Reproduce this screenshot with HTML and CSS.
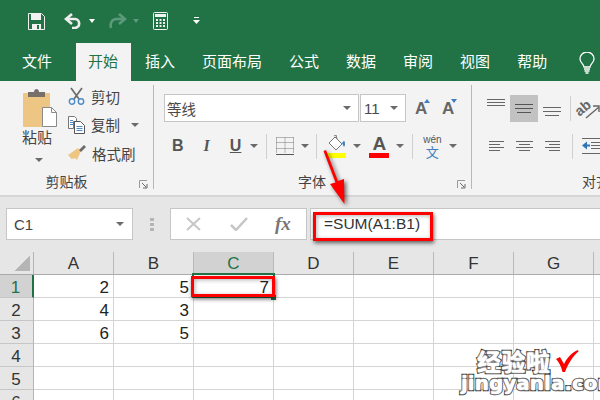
FILE: index.html
```html
<!DOCTYPE html>
<html lang="zh-CN">
  <head>
    <meta charset="UTF-8">
    <title>Excel</title>
    <link rel="stylesheet" href="styles.css">
  </head>
  <body>
    <div class="page">
      <!-- Quick access -->
      <div class="titlebar">
        <svg class="qa qa-save" width="17" height="17" viewBox="0 0 17 17"><path d="M.5.5h13l3 3v13H.5z" fill="none" stroke="#f2f2f2"/><path d="M3 1h10v6H3zM4 11h9v5H4z" fill="#f2f2f2"/><path d="M9 12h2v4H9z" fill="#217346"/></svg>
        <svg class="qa qa-undo" width="19" height="16" viewBox="0 0 19 16"><path d="M8 1L2 6l6 5" fill="none" stroke="#eee" stroke-width="2.6"/><path d="M3 6h8c5 0 6 8 0 9H8" fill="none" stroke="#eee" stroke-width="2.6"/></svg>
        <span class="caret caret-white qa-c1"></span>
        <svg class="qa qa-redo" width="19" height="16" viewBox="0 0 19 16"><path d="M11 1l6 5-6 5" fill="none" stroke="#5c9a7c" stroke-width="2.6"/><path d="M16 6H9c-6 0-7 5-6 9" fill="none" stroke="#5c9a7c" stroke-width="2.6"/></svg>
        <span class="caret caret-dim qa-c2"></span>
        <svg class="qa qa-calc" width="15" height="18" viewBox="0 0 15 18"><rect x=".5" y=".5" width="14" height="17" rx="1" fill="none" stroke="#f2f2f2"/><path d="M2 2h11v3H2zM3 7h2v2H3zM6.500 7h2v2h-2zM10 7h2v2h-2zM3 10h2v2H3zM6.500 10h2v2h-2zM10 10h2v2h-2zM3 13h2v2H3zM6.500 13h2v2h-2zM10 13h2v2h-2z" fill="#f2f2f2"/></svg>
        <svg class="qa qa-more" width="7" height="8" viewBox="0 0 7 8"><path d="M1 .5h5" stroke="#fff"/><path d="M0 3h7L3.500 7z" fill="#fff"/></svg>
      </div>

      <!-- Tabs -->
      <div class="tabs">
        <div class="tab tab-file">文件</div>
        <div class="tab active">开始</div>
        <div class="tab">插入</div>
        <div class="tab">页面布局</div>
        <div class="tab">公式</div>
        <div class="tab">数据</div>
        <div class="tab">审阅</div>
        <div class="tab">视图</div>
        <div class="tab">帮助</div>
        <svg class="bulb" width="16" height="22" viewBox="0 0 16 22"><path d="M5 15c0-3-4-4-4-8a7 7 0 0 1 14 0c0 4-4 5-4 8z" fill="none" stroke="#fff" stroke-width="1.300"/><path d="M5 17h6M5.500 19h5M6.500 21h3" stroke="#fff" stroke-width="1.300"/></svg>
      </div>

      <!-- Ribbon -->
      <div class="ribbon">
        <div class="group group-clip">
          <div class="group-body clip-body">
            <div class="paste">
              <svg width="35" height="39" viewBox="0 0 35 39"><rect x="0" y="4" width="27" height="34" rx="1" fill="#eec684"/><path d="M5 3h6c0-4 5-4 5 0h6v5H5z" fill="#77706a"/><path d="M19.500 18.500h9l5 5v14h-14z" fill="#fff" stroke="#8a8a8a"/><path d="M28.500 18.500v5h5" fill="none" stroke="#8a8a8a"/></svg>
              <span class="paste-label">粘贴</span>
              <span class="caret paste-caret"></span>
            </div>
            <div class="clip-list">
              <div class="clip-row">
                <svg width="17" height="18" viewBox="0 0 17 18"><path d="M3 1l8 11M14 1L6 12" stroke="#6b6b6b" stroke-width="1.700"/><circle cx="4" cy="14.500" r="2.700" fill="none" stroke="#4f8ac6" stroke-width="1.400"/><circle cx="13" cy="14.500" r="2.700" fill="none" stroke="#4f8ac6" stroke-width="1.400"/></svg>
                <span>剪切</span>
              </div>
              <div class="clip-row">
                <svg width="17" height="18" viewBox="0 0 17 18"><path d="M.5.500h6l2 2v3H5.500v7h-5z" fill="#fff" stroke="#777"/><path d="M6.500 5.500h6l4 4v8h-10z" fill="#fff" stroke="#555"/><path d="M8.500 10.500h6M8.500 12.500h6M8.500 14.500h6M2 4.500h3M2 6.500h3M2 8.500h3" stroke="#4f8ac6"/></svg>
                <span>复制</span>
                <span class="caret copy-caret"></span>
              </div>
              <div class="clip-row">
                <svg width="18" height="16" viewBox="0 0 18 16"><path d="M10 3l3 3-4 9-2-2-1 1-1-1-1 1.500L0 10z" fill="#eec684"/><path d="M11 5l5-5 2 2-5 5z" fill="#6b6b6b"/></svg>
                <span>格式刷</span>
              </div>
            </div>
          </div>
          <div class="group-label">剪贴板</div>
          <svg class="launcher" width="9" height="9" viewBox="0 0 9 9"><path d="M.5 8V.5H8" fill="none" stroke="#999"/><path d="M3 3l4 4M8 4v4H4" fill="none" stroke="#666"/></svg>
        </div>

        <div class="group group-font">
          <div class="group-body">
            <div class="font-row">
              <div class="combo combo-name">等线<span class="caret"></span></div>
              <div class="combo combo-size">11<span class="caret"></span></div>
              <div class="grow">
                <span class="grow-a">A</span>
                <svg width="6" height="4" viewBox="0 0 6 4"><path d="M0 4h6L3 0z" fill="#3f7fbf"/></svg>
              </div>
              <div class="grow grow-down">
                <span class="grow-a">A</span>
                <svg width="6" height="4" viewBox="0 0 6 4"><path d="M0 0h6L3 4z" fill="#3f7fbf"/></svg>
              </div>
            </div>
            <div class="format-row">
              <span class="fmt fmt-b">B</span>
              <span class="fmt fmt-i">I</span>
              <span class="fmt fmt-u">U</span>
              <span class="caret fmt-c-u"></span>
              <span class="sep sep-1"></span>
              <svg class="ico-border" width="18" height="18" viewBox="0 0 18 18"><path d="M.5.500h17M.5 5.500h17M.5 11.500h17M.5.500v15M9 .5v15M17.500.5v15" fill="none" stroke="#777" stroke-dasharray="1 1"/><path d="M0 17.500h18" stroke="#555"/></svg>
              <span class="caret fmt-c-b"></span>
              <span class="sep sep-2"></span>
              <svg class="ico-fill" width="21" height="23" viewBox="0 0 21 23"><path d="M9 2l7 7-6 6-7-7z" fill="#fff" stroke="#777"/><path d="M8 1l2-1 1 4" fill="none" stroke="#777"/><path d="M16 8c2-3 3-3 3 2l-1 2z" fill="#3f7fbf"/><path d="M0 18h20v5H0z" fill="#ff0"/></svg>
              <span class="caret fmt-c-f"></span>
              <div class="ico-color">
                <span>A</span>
                <i></i>
              </div>
              <span class="caret fmt-c-a"></span>
              <span class="sep sep-3"></span>
              <div class="ico-wen">
                <span class="wen-top">wén</span>
                <span class="wen-bot">文</span>
              </div>
              <span class="caret fmt-c-w"></span>
            </div>
          </div>
          <div class="group-label">字体</div>
          <svg class="launcher" width="9" height="9" viewBox="0 0 9 9"><path d="M.5 8V.5H8" fill="none" stroke="#999"/><path d="M3 3l4 4M8 4v4H4" fill="none" stroke="#666"/></svg>
        </div>

        <div class="group group-align">
          <div class="group-body">
            <div class="align-row">
              <svg class="al al-top" width="18" height="8" viewBox="0 0 18 8"><path d="M0 .5h18M0 3.500h18M0 6.500h18" stroke="#666"/></svg>
              <div class="al-mid"><svg width="18" height="10" viewBox="0 0 18 10"><path d="M0 .5h18M0 4.500h18M2 8.500h14" stroke="#555"/></svg></div>
              <svg class="al al-bot" width="18" height="10" viewBox="0 0 18 10"><path d="M0 .5h18M0 4.500h18M2 8.500h14" stroke="#666"/></svg>
              <span class="sep sep-4"></span>
              <svg class="al-ab" width="26" height="22" viewBox="0 0 26 22"><text x="1" y="15" transform="rotate(-40 8 12)" class="ab-text">ab</text><path d="M11 20L24 9M18 8h6v6" fill="none" stroke="#666" stroke-width="1.400"/></svg>
            </div>
            <div class="align-row align-row-2">
              <svg width="15" height="11" viewBox="0 0 15 11"><path d="M0 .5h15M0 3.500h11M0 6.500h15M0 9.500h11" stroke="#666"/></svg>
              <svg width="17" height="11" viewBox="0 0 17 11"><path d="M0 .5h17M3 3.500h11M0 6.500h17M3 9.500h11" stroke="#666"/></svg>
              <svg width="15" height="11" viewBox="0 0 15 11"><path d="M0 .5h15M4 3.500h11M0 6.500h15M4 9.500h11" stroke="#666"/></svg>
              <span class="sep sep-5"></span>
              <svg class="al-indent" width="20" height="16" viewBox="0 0 20 16"><path d="M0 .5h20M9 4.500h11M9 7.500h11M9 10.500h11M0 15.500h20" stroke="#666"/><path d="M0 7.500l5-4v3h3v2H5v3z" fill="#2f75b5"/></svg>
            </div>
          </div>
          <div class="group-label align-label">对齐</div>
        </div>
      </div>

      <!-- Formula bar -->
      <div class="formula">
        <div class="namebox">C1<span class="caret"></span></div>
        <div class="grip"><i></i><i></i><i></i></div>
        <div class="fx-box">
          <svg width="15" height="14" viewBox="0 0 15 14"><path d="M1 1l13 12M14 1L1 13" stroke="#c6c6c6" stroke-width="2"/></svg>
          <svg class="fx-check" width="18" height="14" viewBox="0 0 18 14"><path d="M1 8l5 5L17 1" fill="none" stroke="#c6c6c6" stroke-width="2.500"/></svg>
          <span class="fx">fx</span>
        </div>
        <div class="formula-text">=SUM(A1:B1)</div>
      </div>

      <!-- Sheet -->
      <div class="sheet">
        <div class="corner"></div>
        <div class="col">A</div><div class="col">B</div><div class="col col-on">C</div><div class="col">D</div><div class="col">E</div><div class="col">F</div><div class="col">G</div><div class="col"></div>

        <div class="row row-on">1</div><div class="cell">2</div><div class="cell">5</div><div class="cell">7</div><div class="cell"></div><div class="cell"></div><div class="cell"></div><div class="cell"></div><div class="cell"></div>
        <div class="row">2</div><div class="cell">4</div><div class="cell">3</div><div class="cell"></div><div class="cell"></div><div class="cell"></div><div class="cell"></div><div class="cell"></div><div class="cell"></div>
        <div class="row">3</div><div class="cell">6</div><div class="cell">5</div><div class="cell"></div><div class="cell"></div><div class="cell"></div><div class="cell"></div><div class="cell"></div><div class="cell"></div>
        <div class="row">4</div><div class="cell"></div><div class="cell"></div><div class="cell"></div><div class="cell"></div><div class="cell"></div><div class="cell"></div><div class="cell"></div><div class="cell"></div>
        <div class="row">5</div><div class="cell"></div><div class="cell"></div><div class="cell"></div><div class="cell"></div><div class="cell"></div><div class="cell"></div><div class="cell"></div><div class="cell"></div>
        <div class="row">6</div><div class="cell"></div><div class="cell"></div><div class="cell"></div><div class="cell"></div><div class="cell"></div><div class="cell"></div><div class="cell"></div><div class="cell"></div>
      </div>

      <!-- Annotations on top of the shot -->
      <div class="selection"></div>
      <div class="handle"></div>
      <div class="mark mark-formula"></div>
      <div class="mark mark-cell"></div>
      <svg class="arrow" width="40" height="70" viewBox="0 0 40 70"><path d="M3.500 1L6 0l12 31 6-2 .5 25L10 34l5.500-1.500z" fill="#f00"/></svg>
      <div class="wm wm-cn">经验啦</div>
      <div class="wm wm-en">jingyanla.com</div>
      <svg class="wm-check" width="24" height="24" viewBox="0 0 24 24"><path d="M1 10l4-2 4 7C12 9 17 3 23 1l.5 1.500C18 7 13 15 10 23H7.500C6 17 4 13 1 10z" fill="#f00"/></svg>
    </div>
  </body>
</html>
```

FILE: styles.css
```css
/* Reset */
* {
  margin: 0;
  padding: 0;
  box-sizing: border-box;
}

body {
  font-family: 'Noto Sans CJK SC', 'Liberation Sans', sans-serif;
  background-color: #fff;
}

.page {
  position: relative;
  width: 600px;
  height: 400px;
  overflow: hidden;
}

svg {
  display: block;
  flex: none;
}

.caret {
  display: block;
  flex: none;
  width: 0;
  height: 0;
  border-left: 4px solid transparent;
  border-right: 4px solid transparent;
  border-top: 4px solid #6a6a6a;
}

.caret-white {
  border-left-width: 3.500px;
  border-right-width: 3.500px;
  border-top-color: #fff;
}

.caret-dim {
  border-left-width: 3.500px;
  border-right-width: 3.500px;
  border-top-color: #5c9a7c;
}

/* Title bar */
.titlebar {
  display: flex;
  align-items: center;
  height: 43px;
  padding: 0 0 1px 28px;
  background-color: #217346;
}

.qa-undo { margin-left: 19px; }
.qa-c1 { margin-left: 6px; }
.qa-redo { margin-left: 13px; }
.qa-c2 { margin-left: 6px; }
.qa-calc { margin-left: 14px; }
.qa-more { margin-left: 25px; }

/* Tabs */
.tabs {
  display: flex;
  gap: 2px;
  height: 38px;
  padding-left: 9.500px;
  background-color: #217346;
}

.tab {
  padding: 0 12.500px;
  color: #fff;
  font-size: 15px;
  line-height: 35px;
}

.tab-file { margin-right: 9px; }

.tab.active {
  background-color: #f3f3f3;
  color: #217346;
}

.bulb {
  margin: 9px 0 0 17px;
}

/* Ribbon */
.ribbon {
  display: flex;
  height: 116px;
  padding: 4px 0 6px;
  background-color: #f3f3f3;
  border-bottom: 2px solid #d6d6d6;
}

.group {
  position: relative;
  display: flex;
  flex-direction: column;
  flex: none;
  border-right: 1px solid #b8b8b8;
  color: #444;
}

.group-body {
  height: 90px;
}

.group-label {
  font-size: 14px;
  line-height: 16px;
  text-align: center;
  color: #444;
}

.launcher {
  position: absolute;
  right: 5px;
  bottom: 0;
}

.group-clip { width: 154px; }
.group-font { width: 318px; }
.group-align { border-right: none; flex: 1; }

.group-clip .group-label { padding-right: 20px; }
.group-font .group-label { padding-right: 1px; }

.clip-body {
  display: flex;
}

.paste {
  display: flex;
  flex-direction: column;
  align-items: flex-start;
  width: 68px;
  padding: 4px 0 0 23px;
  font-size: 15px;
}

.paste-label {
  margin: -2px 0 0 -1px;
  line-height: 22px;
}

.paste-caret {
  margin: 10px 0 0 12px;
}

.clip-list {
  display: flex;
  flex-direction: column;
  gap: 10.500px;
  padding-top: 2px;
}

.clip-row {
  display: flex;
  align-items: center;
  gap: 6px;
  height: 18px;
  font-size: 14.500px;
}

.copy-caret {
  margin-left: 5px;
}

/* Font group */
.font-row {
  display: flex;
  align-items: center;
  height: 28px;
  margin: 9px 0 0 10px;
}

.combo {
  position: relative;
  display: flex;
  align-items: center;
  justify-content: space-between;
  height: 28px;
  padding: 0 7px 0 2px;
  border: 1px solid #c6c6c6;
  background-color: #fff;
  font-size: 14.500px;
  color: #4a4a4a;
}

.combo-name { width: 195px; margin-right: 1px; }
.combo-size { width: 46px; padding-left: 3px; font-family: 'Liberation Sans', sans-serif; font-size: 15px; }

.grow {
  display: flex;
  align-items: flex-start;
  height: 24px;
  margin-left: 9px;
  width: 18px;
}

.grow svg { margin: 3px 0 0 -3px; }
.grow-down { margin-left: 9px; }

.grow-a {
  font-family: 'Liberation Sans', sans-serif;
  font-size: 17px;
  font-weight: 700;
  line-height: 26px;
  color: #666;
}

.format-row {
  display: flex;
  align-items: center;
  height: 28px;
  margin: 10px 0 0 0;
}

.fmt {
  font-family: 'Liberation Sans', sans-serif;
  font-size: 16px;
  font-weight: 700;
  color: #555;
}

.fmt-b { margin-left: 18px; }
.fmt-i { margin-left: 20px; font-style: italic; font-family: 'Liberation Serif', serif; }
.fmt-u { margin-left: 20px; text-decoration: underline; }
.fmt-c-u { margin-left: 9px; }

.sep {
  display: block;
  flex: none;
  width: 1px;
  height: 25px;
  background-color: #d0d0d0;
}

.sep-1 { margin-left: 8px; }
.ico-border { margin-left: 9px; }
.fmt-c-b { margin-left: 7px; }
.sep-2 { margin-left: 7px; }
.ico-fill { margin-left: 9px; }
.fmt-c-f { margin-left: 6px; }
.ico-color { margin-left: 8px; }
.fmt-c-a { margin-left: 7px; }
.sep-3 { margin-left: 8px; }
.fmt-c-w { margin-left: 8px; }

.ico-color {
  display: flex;
  flex-direction: column;
  width: 20px;
  text-align: center;
  font-family: 'Liberation Sans', sans-serif;
  font-size: 19px;
  font-weight: 700;
  line-height: 18px;
  color: #555;
}

.ico-color i {
  display: block;
  height: 5px;
  background-color: #f00;
}

.ico-wen {
  display: flex;
  flex-direction: column;
  align-items: center;
  width: 18px;
  margin-left: 10px;
}

.wen-top {
  font-family: 'Liberation Sans', sans-serif;
  font-size: 10px;
  line-height: 11px;
  color: #555;
}

.wen-bot {
  font-size: 13px;
  line-height: 14px;
  color: #3f7fbf;
}

/* Alignment group */
.align-row {
  display: flex;
  align-items: center;
  height: 27px;
  margin: 10px 0 0 15px;
}

.al-top { margin-top: -11px; }
.al-mid {
  display: flex;
  align-items: center;
  justify-content: center;
  width: 28px;
  height: 27px;
  margin-left: 5px;
  background-color: #c2c2c2;
}
.al-bot { margin: 7px 0 0 5px; }
.sep-4 { margin-left: 9px; }
.al-ab { margin-left: 4px; }

.ab-text {
  font-family: 'Liberation Sans', sans-serif;
  font-size: 14px;
  font-weight: 700;
  fill: #666;
}

.align-row-2 {
  height: 28px;
  margin-left: 17px;
  gap: 12px;
}

.sep-5 { margin-left: 0; }
.al-indent { margin-left: -3px; }

.align-label {
  text-align: left;
  padding-left: 110px;
  white-space: nowrap;
}

/* Formula bar */
.formula {
  display: flex;
  align-items: flex-start;
  height: 55px;
  padding: 11px 0 0 6px;
  background-color: #e6e6e6;
}

.namebox {
  display: flex;
  align-items: center;
  justify-content: space-between;
  width: 127px;
  height: 32px;
  padding: 0 8px 0 7px;
  border: 1px solid #c6c6c6;
  background-color: #fff;
  font-family: 'Liberation Sans', sans-serif;
  font-size: 15px;
  color: #444;
}

.grip {
  display: flex;
  flex-direction: column;
  gap: 2px;
  width: 4px;
  margin: 10px 0 0 17px;
}

.grip i {
  display: block;
  height: 3px;
  background-color: #b4b4b4;
}

.fx-box {
  display: flex;
  align-items: center;
  width: 137px;
  height: 32px;
  margin-left: 16px;
  padding-left: 15px;
  border: 1px solid #c6c6c6;
  background-color: #fff;
}

.fx-check { margin-left: 29px; }

.fx {
  margin-left: 27px;
  font-family: 'Liberation Serif', serif;
  font-size: 19px;
  font-style: italic;
  font-weight: 700;
  color: #777;
}

.formula-text {
  flex: 1;
  height: 32px;
  margin-left: 3px;
  padding-left: 13px;
  border: 1px solid #c6c6c6;
  border-right: none;
  background-color: #fff;
  font-family: 'Liberation Sans', sans-serif;
  font-size: 15.500px;
  line-height: 29px;
  color: #333;
}

/* Sheet */
.sheet {
  display: grid;
  grid-template-columns: 34px repeat(8, 80px);
  grid-template-rows: 23px repeat(6, 23px);
  height: 148px;
  overflow: hidden;
  background-color: #e6e6e6;
}

.corner {
  border-right: 1px solid #b4b4b4;
  border-bottom: 1px solid #aaa;
  background: linear-gradient(135deg, transparent 50%, #b5b5b5 50%) no-repeat 15px 4px / 15px 15px;
}

.col {
  border-right: 1px solid #b9b9b9;
  border-bottom: 1px solid #aaa;
  font-family: 'Liberation Sans', sans-serif;
  font-size: 17px;
  line-height: 24px;
  text-align: center;
  color: #333;
}

.col-on {
  background-color: #d2d2d2;
  border-bottom-color: #217346;
  color: #217346;
}

.row {
  border-right: 1px solid #b4b4b4;
  border-bottom: 1px solid #c6c6c6;
  font-family: 'Liberation Sans', sans-serif;
  font-size: 17px;
  line-height: 25px;
  text-align: center;
  color: #333;
  padding-right: 1px;
}

.row-on {
  background-color: #d2d2d2;
  border-right: 2px solid #217346;
  color: #217346;
}

.cell {
  border-right: 1px solid #d4d4d4;
  border-bottom: 1px solid #d4d4d4;
  background-color: #fff;
  font-family: 'Liberation Sans', sans-serif;
  font-size: 17px;
  line-height: 25px;
  text-align: right;
  padding-right: 4px;
  color: #222;
}

/* Overlays */
.selection {
  position: absolute;
  left: 192px;
  top: 273px;
  width: 83px;
  height: 25px;
  border: 2px solid #217346;
}

.handle {
  position: absolute;
  left: 271px;
  top: 295px;
  width: 5px;
  height: 5px;
  background-color: #217346;
}

.mark {
  position: absolute;
  border: 3px solid #f00;
  box-shadow: 1px 2px 4px rgba(0, 0, 0, 0.6), inset 1px 1px 4px rgba(0, 0, 0, 0.3);
}

.mark-formula {
  left: 313px;
  top: 212px;
  width: 120px;
  height: 29px;
  border-width: 3.500px;
}

.mark-cell {
  left: 191px;
  top: 276px;
  width: 84px;
  height: 21px;
}

.arrow {
  position: absolute;
  left: 320px;
  top: 150px;
  filter: drop-shadow(2px 2px 2px rgba(0, 0, 0, 0.6));
}

.wm {
  position: absolute;
  color: #fff;
  font-weight: 700;
  white-space: nowrap;
  -webkit-text-stroke: 2.500px #222;
  paint-order: stroke fill;
  text-shadow: 0 0 2px #fff, 0 0 2px #fff;
}

.wm-cn {
  left: 477px;
  top: 344px;
  font-size: 24px;
  line-height: 34px;
  letter-spacing: 0.500px;
}

.wm-en {
  left: 461px;
  top: 371px;
  font-family: 'DejaVu Sans', sans-serif;
  font-size: 20px;
  line-height: 24px;
}

.wm-check {
  position: absolute;
  left: 555px;
  top: 349px;
}
```
